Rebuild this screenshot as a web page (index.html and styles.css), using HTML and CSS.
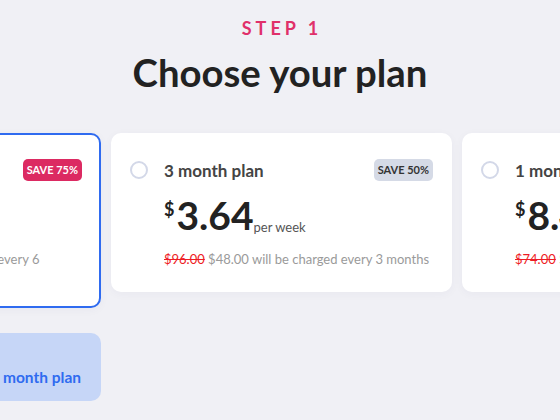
FILE: index.html
```html
<!DOCTYPE html>
<html>
<head>
<meta charset="utf-8">
<link rel="stylesheet" href="styles.css">
</head>
<body>
<main class="page">
  <header class="head">
    <div class="step">STEP 1</div>
    <h1 class="title">Choose your plan</h1>
  </header>
  <section class="plans">
    <div class="card selected">
      <div class="top">
        <span class="radio on"></span>
        <span class="name">6 month plan</span>
        <span class="badge hot">SAVE 75%</span>
      </div>
      <div class="price"><span class="cur">$</span><span class="amt">2.77</span><span class="per">per week</span></div>
      <div class="note"><s class="old">$288.00</s> $72.00 will be charged every 6 months</div>
    </div>
    <div class="card">
      <div class="top">
        <span class="radio"></span>
        <span class="name">3 month plan</span>
        <span class="badge">SAVE 50%</span>
      </div>
      <div class="price"><span class="cur">$</span><span class="amt">3.64</span><span class="per">per week</span></div>
      <div class="note"><s class="old">$96.00</s> $48.00 will be charged every 3 months</div>
    </div>
    <div class="card">
      <div class="top">
        <span class="radio"></span>
        <span class="name">1 month plan</span>
      </div>
      <div class="price"><span class="cur">$</span><span class="amt">8.45</span><span class="per">per week</span></div>
      <div class="note"><s class="old">$74.00</s> $37.00 will be charged every month</div>
    </div>
  </section>
  <div class="actions">
    <button class="cta">Continue with 6 month plan</button>
  </div>
</main>
</body>
</html>
```
FILE: styles.css
```css
* { box-sizing: border-box; }
html, body { margin: 0; padding: 0; }
body {
  background: #f0f0f5;
  font-family: Lato, "Open Sans", sans-serif;
  color: #222;
  width: 560px;
  height: 420px;
  overflow: hidden;
}
.page { display: flex; flex-direction: column; }
.head {
  display: flex;
  flex-direction: column;
  align-items: center;
  padding-top: 17px;
}
.step {
  color: #e0306a;
  font-size: 18px;
  font-weight: 700;
  letter-spacing: 4px;
  line-height: 22px;
  padding-left: 4px;
}
.title {
  margin: 10px 0 0;
  font-size: 38.3px;
  font-weight: 700;
  line-height: 46px;
  color: #222;
}
.plans {
  display: flex;
  gap: 10px;
  margin-top: 38px;
  margin-left: -240px;
  align-items: flex-start;
}
.card {
  flex: 0 0 341px;
  width: 341px;
  background: #fff;
  border: 2px solid transparent;
  border-radius: 10px;
  padding: 24px 17px 23px;
  box-shadow: 0 2px 10px rgba(40, 50, 90, 0.04);
}
.card.selected { border-color: #2f6bf0; }
.top {
  display: flex;
  align-items: center;
  height: 22px;
}
.radio {
  width: 18px;
  height: 18px;
  border-radius: 50%;
  border: 2px solid #d3d8e8;
  flex: 0 0 18px;
  margin-right: 16px;
  display: flex;
  align-items: center;
  justify-content: center;
}
.radio.on { border-color: #2f6bf0; }
.radio.on::after {
  content: "";
  width: 8px;
  height: 8px;
  border-radius: 50%;
  background: #2f6bf0;
}
.name {
  font-size: 17px;
  font-weight: 700;
  color: #444;
  flex: 1;
}
.badge {
  background: #d5dae6;
  color: #333;
  font-size: 11px;
  font-weight: 700;
  height: 22px;
  line-height: 22px;
  padding: 0 4px;
  border-radius: 5px;
}
.badge.hot { background: #dc2a62; color: #fff; }
.price {
  margin-top: 16px;
  margin-left: 34px;
  line-height: 36px;
  height: 36px;
  white-space: nowrap;
}
.cur {
  font-size: 18px;
  font-weight: 700;
  vertical-align: 14px;
  line-height: 1;
  margin-right: 2px;
}
.amt {
  font-size: 39px;
  font-weight: 700;
  color: #222;
}
.per {
  font-size: 13px;
  color: #555;
  vertical-align: -2px;
  line-height: 1;
}
.note {
  margin-top: 18px;
  margin-left: 34px;
  font-size: 13px;
  line-height: 16px;
  color: #9a9a9a;
}
.old { color: #ee1c25; }
.actions {
  margin-top: 25px;
  margin-left: -240px;
  display: flex;
}
.cta {
  width: 341px;
  height: 68px;
  border: none;
  border-radius: 10px;
  background: #c6d6f7;
  color: #2f6bf0;
  font-family: Lato, "Open Sans", sans-serif;
  font-size: 15.5px;
  font-weight: 700;
  display: flex;
  justify-content: flex-end;
  align-items: flex-end;
  padding: 0 20px 15px;
}
```
